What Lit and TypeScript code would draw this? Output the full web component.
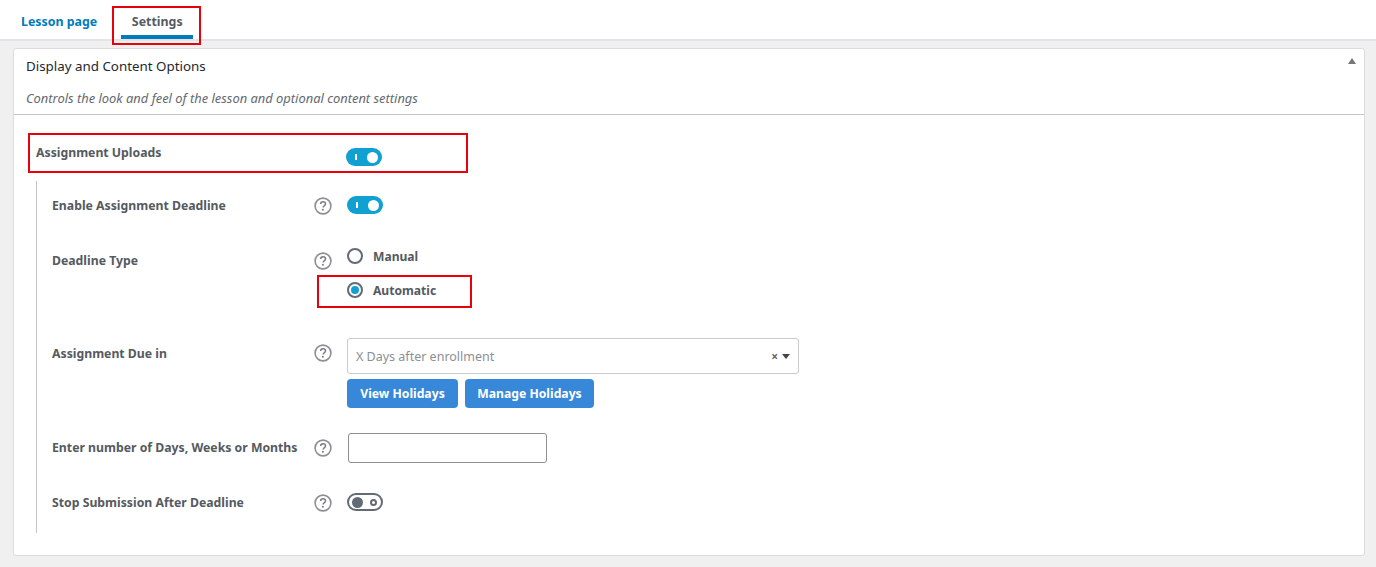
import { LitElement, html, css } from "lit";
import { customElement } from "lit/decorators.js";

const help = html`<svg class="help" width="18" height="18" viewBox="0 0 18 18" aria-hidden="true">
  <circle cx="9" cy="9" r="7.9" fill="none" stroke="#8c8f94" stroke-width="1.6"></circle>
  <path d="M6.6 7.1c0-1.5 1.1-2.4 2.5-2.4s2.4.9 2.4 2.1c0 1-.5 1.5-1.3 2-.7.5-1 .8-1 1.6" fill="none" stroke="#7a7d82" stroke-width="1.5"></path>
  <circle cx="8.9" cy="12.8" r="1" fill="#7a7d82"></circle>
</svg>`;

const toggle = (on: boolean) => html`<span class="toggle ${on ? "on" : "off"}"><i class="mark"></i><i class="knob"></i></span>`;

@customElement("app-root")
export class AppRoot extends LitElement {
  static styles = css`
    :host { display: block; width: 1376px; height: 567px; position: relative; overflow: hidden; background: #f0f0f1; font-family: "Noto Sans", "Open Sans", sans-serif; color: #555a60; }
    .tabs { display: flex; height: 39px; background: #fff; border-bottom: 2px solid #e2e4e7; padding-left: 11px; gap: 14px; box-sizing: content-box; }
    .tab { padding: 4px 10px 0; height: 39px; box-sizing: border-box; display: flex; align-items: center; font-size: 12.4px; font-weight: 700; color: #007cba; }
    .tab.active { color: #555a60; border-bottom: 4px solid #007cba; padding: 8px 10px 0; width: 72px; justify-content: center; }
    .card { margin: 7px 11px 0 13px; height: 508px; box-sizing: border-box; background: #fff; border: 1px solid #dcdcde; border-radius: 3px; display: flex; flex-direction: column; position: relative; }
    .head { height: 66px; box-sizing: border-box; border-bottom: 1px solid #c3c4c7; padding: 7px 12px 0; flex: none; }
    .title { font-size: 13.35px; line-height: 20px; color: #23282d; }
    .desc { font-size: 12.9px; line-height: 18px; font-style: italic; color: #646970; margin-top: 13px; }
    .arrow { position: absolute; right: 8px; top: 9px; width: 0; height: 0; border-left: 4px solid transparent; border-right: 4px solid transparent; border-bottom: 6px solid #72777c; }
    .body { padding: 0 0 0 22px; }
    .main { display: flex; align-items: flex-start; height: 66px; padding-top: 30px; box-sizing: border-box; }
    .main .label { width: 310px; line-height: 16px; }
    .main .toggle { margin-top: 3px; }
    .sub { border-left: 1px solid #c3c4c7; padding-left: 15px; height: 352px; box-sizing: border-box; padding-top: 15px; display: flex; flex-direction: column; }
    .row { display: grid; grid-template-columns: 262px 33px 1fr; align-items: start; }
    .label { font-size: 12.25px; font-weight: 700; line-height: 20px; white-space: nowrap; }
    .help { display: block; margin-top: 1px; }
    .r3 .help { margin-top: 0; }
    .toggle { display: block; width: 36px; height: 18px; border-radius: 9px; position: relative; box-sizing: border-box; }
    .toggle.on { background: #11a0d2; }
    .toggle.off { border: 2px solid #616b76; background: #fff; }
    .mark, .knob { position: absolute; display: block; }
    .on .mark { left: 9px; top: 6px; width: 2px; height: 6px; background: #fff; }
    .on .knob { right: 4px; top: 3.5px; width: 11px; height: 11px; border-radius: 50%; background: #fff; }
    .off .knob { left: 2.5px; top: 1.5px; width: 11px; height: 11px; border-radius: 50%; background: #616b76; }
    .off .mark { right: 4px; top: 3.5px; width: 7px; height: 7px; border-radius: 50%; border: 2px solid #616b76; box-sizing: border-box; }
    .r1 { height: 55px; }
    .r2 { height: 93px; }
    .r3 { height: 94px; }
    .r4 { height: 55px; }
    .radios { display: flex; flex-direction: column; gap: 16px; margin-top: -4px; }
    .radio { display: flex; align-items: center; gap: 10px; font-size: 12.1px; font-weight: 700; height: 18px; }
    .dot { width: 16px; height: 16px; border: 2px solid #616b76; border-radius: 50%; box-sizing: border-box; display: flex; align-items: center; justify-content: center; }
    .dot.sel::after { content: ""; width: 8px; height: 8px; border-radius: 50%; background: #11a0d2; }
    .due { margin-top: -6px; }
    .select { width: 452px; height: 36px; box-sizing: border-box; border: 1px solid #c9cacc; border-radius: 3px; display: flex; align-items: center; padding: 0 8px; font-size: 12.5px; color: #8c8f94; }
    .select span:first-child { flex: 1; }
    .x { font-size: 12px; font-weight: 700; color: #666; margin-right: 4px; }
    .caret { width: 0; height: 0; border-left: 4px solid transparent; border-right: 4px solid transparent; border-top: 5px solid #444; margin-top: 1px; }
    .btns { display: flex; gap: 7px; margin-top: 5px; }
    .btn { height: 29px; display: flex; align-items: center; justify-content: center; background: #3788d8; color: #fff; border-radius: 4px; font-size: 12.2px; font-weight: 700; }
    .view { width: 111px; }
    .manage { width: 129px; }
    .input { width: 199px; height: 30px; box-sizing: border-box; border: 1px solid #8c8f94; border-radius: 3px; margin: -5px 0 0 1px; background: #fff; }
    .mark-box { position: absolute; border: 2px solid #e8000b; box-sizing: border-box; pointer-events: none; }
    .m1 { left: 112px; top: 6px; width: 89px; height: 39px; }
    .m2 { left: 28px; top: 133px; width: 440px; height: 40px; }
    .m3 { left: 317px; top: 275px; width: 155px; height: 33px; }
  `;

  render() {
    return html`
      <nav class="tabs">
        <div class="tab">Lesson page</div>
        <div class="tab active">Settings</div>
      </nav>
      <section class="card">
        <header class="head">
          <div class="title">Display and Content Options</div>
          <div class="desc">Controls the look and feel of the lesson and optional content settings</div>
          <i class="arrow"></i>
        </header>
        <div class="body">
          <div class="main"><div class="label">Assignment Uploads</div>${toggle(true)}</div>
          <div class="sub">
            <div class="row r1"><div class="label">Enable Assignment Deadline</div>${help}${toggle(true)}</div>
            <div class="row r2"><div class="label">Deadline Type</div>${help}
              <div class="radios">
                <div class="radio"><i class="dot"></i>Manual</div>
                <div class="radio"><i class="dot sel"></i>Automatic</div>
              </div>
            </div>
            <div class="row r3"><div class="label">Assignment Due in</div>${help}
              <div class="due">
                <div class="select"><span>X Days after enrollment</span><span class="x">×</span><i class="caret"></i></div>
                <div class="btns"><div class="btn view">View Holidays</div><div class="btn manage">Manage Holidays</div></div>
              </div>
            </div>
            <div class="row r4"><div class="label">Enter number of Days, Weeks or Months</div>${help}<div class="input"></div></div>
            <div class="row"><div class="label">Stop Submission After Deadline</div>${help}${toggle(false)}</div>
          </div>
        </div>
      </section>
      <div class="mark-box m1"></div>
      <div class="mark-box m2"></div>
      <div class="mark-box m3"></div>
    `;
  }
}
